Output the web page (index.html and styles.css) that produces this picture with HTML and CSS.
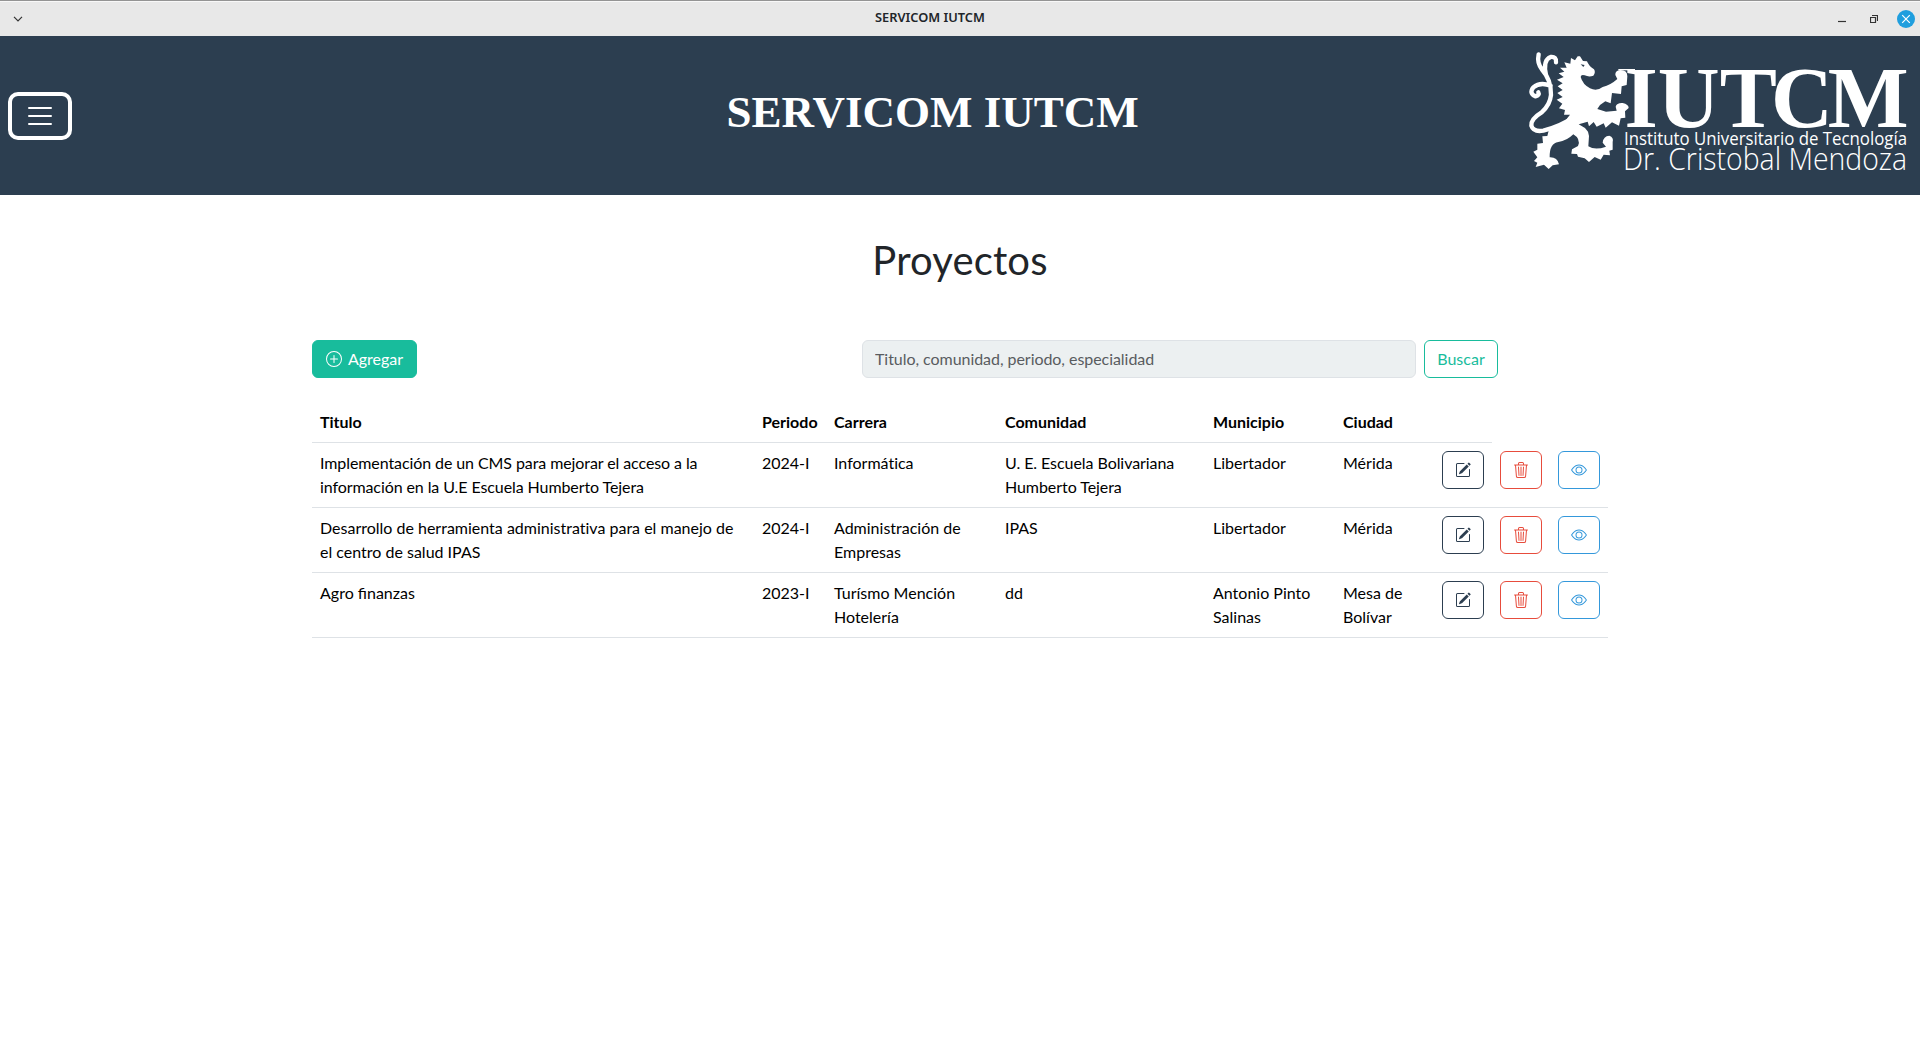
FILE: index.html
```html
<!DOCTYPE html>
<html lang="es">
<head>
<meta charset="utf-8">
<title>SERVICOM IUTCM</title>
<link rel="stylesheet" href="styles.css">
</head>
<body>
<svg class="sprite" aria-hidden="true">
  <symbol id="pencil" viewBox="0 0 16 16"><path d="M15.502 1.94a.5.5 0 0 1 0 .706L14.459 3.69l-2-2L13.502.646a.5.5 0 0 1 .707 0l1.293 1.293zm-1.75 2.456-2-2L4.939 9.21a.5.5 0 0 0-.121.196l-.805 2.414a.25.25 0 0 0 .316.316l2.414-.805a.5.5 0 0 0 .196-.12l6.813-6.814z"/><path fill-rule="evenodd" d="M1 13.5A1.5 1.5 0 0 0 2.5 15h11a1.5 1.5 0 0 0 1.5-1.5v-6a.5.5 0 0 0-1 0v6a.5.5 0 0 1-.5.5h-11a.5.5 0 0 1-.5-.5v-11a.5.5 0 0 1 .5-.5H9a.5.5 0 0 0 0-1H2.5A1.5 1.5 0 0 0 1 2.5v11z"/></symbol>
  <symbol id="trash" viewBox="0 0 16 16"><path d="M6.5 1h3a.5.5 0 0 1 .5.5v1H6v-1a.5.5 0 0 1 .5-.5ZM11 2.5v-1A1.5 1.5 0 0 0 9.5 0h-3A1.5 1.5 0 0 0 5 1.5v1H2.506a.58.58 0 0 0-.01 0H1.5a.5.5 0 0 0 0 1h.538l.853 10.66A2 2 0 0 0 4.885 16h6.23a2 2 0 0 0 1.994-1.84l.853-10.66h.538a.5.5 0 0 0 0-1h-.995a.59.59 0 0 0-.01 0H11Zm1.958 1-.846 10.58a1 1 0 0 1-.997.92h-6.23a1 1 0 0 1-.997-.92L3.042 3.5h9.916Zm-7.487 1a.5.5 0 0 1 .528.47l.5 8.5a.5.5 0 0 1-.998.06L5 5.03a.5.5 0 0 1 .47-.53Zm5.058 0a.5.5 0 0 1 .47.53l-.5 8.5a.5.5 0 1 1-.998-.06l.5-8.5a.5.5 0 0 1 .528-.47ZM8 4.5a.5.5 0 0 1 .5.5v8.5a.5.5 0 0 1-1 0V5a.5.5 0 0 1 .5-.5Z"/></symbol>
  <symbol id="eye" viewBox="0 0 16 16"><path d="M16 8s-3-5.500-8-5.500S0 8 0 8s3 5.500 8 5.500S16 8 16 8zM1.173 8a13.133 13.133 0 0 1 1.660-2.043C4.120 4.668 5.880 3.500 8 3.500c2.120 0 3.879 1.168 5.168 2.457A13.133 13.133 0 0 1 14.828 8c-.058.087-.122.183-.195.288-.335.480-.830 1.120-1.465 1.755C11.879 11.332 10.119 12.500 8 12.500c-2.120 0-3.879-1.168-5.168-2.457A13.134 13.134 0 0 1 1.172 8z"/><path d="M8 5.500a2.500 2.500 0 1 0 0 5 2.500 2.500 0 0 0 0-5zM4.500 8a3.500 3.500 0 1 1 7 0 3.500 3.500 0 0 1-7 0z"/></symbol>
</svg>

<div class="titlebar">
  <svg class="chevron" viewBox="0 0 10 6"><path d="M1 .8 5 4.800 9 .8"/></svg>
  <span class="window-title">SERVICOM IUTCM</span>
  <div class="window-controls">
    <svg width="8" height="18" viewBox="0 0 8 18"><path d="M0 11.500h8"/></svg>
    <svg width="8" height="18" viewBox="0 0 8 18"><path d="M.5 7.500h5v5h-5zM2 5.500h5.500V11"/></svg>
    <svg width="18" height="18" viewBox="0 0 18 18"><circle cx="9" cy="9" r="9"/><path class="cross" d="m5.200 5.200 7.600 7.600m0-7.600-7.600 7.600"/></svg>
  </div>
</div>

<header class="navbar">
  <button class="toggler" aria-label="Menú"><svg viewBox="0 0 30 30"><path d="M4 7h22M4 15h22M4 23h22"/></svg></button>
  <h1 class="brand">SERVICOM IUTCM</h1>
  <svg class="logo" viewBox="1520 46 390 130">
    <g transform="translate(1510 35) scale(.33333)">
      <path class="tail" d="M86 58Q80 85 97 105Q124 135 123 180Q120 210 95 232Q62 252 64 272Q70 292 100 287Q150 275 195 245M108 120Q98 75 122 66Q140 64 138 82M122 152Q90 140 70 157Q56 175 76 184Q90 180 85 172"/>
      <path fill-rule="evenodd" d="M210 64L219 78 231 79Q236 93 252 103Q258 112 250 122Q237 127 224 121Q213 117 212 126Q218 148 240 160Q260 170 278 156Q302 150 322 132L316 120Q315 107 331 105Q352 105 352 124L350 150 335 154 333 177 306 174 302 205 286 199 270 210 262 222 288 230 320 227 317 215Q320 203 338 204Q356 208 356 219L345 229 346 248 332 250 327 272 306 262 287 278 281 265 260 275 251 261 237 274 233 260 206 268 225 279 234 290 237 303 235 334Q255 347 288 335L278 323Q280 303 298 302Q312 307 308 321L308 344 298 347 300 361 281 359 272 374 254 366 237 381 224 370 204 365 201 357 184 356 186 343 204 333Q213 312 190 298Q170 318 145 321Q118 325 119 367Q142 366 147 388L128 391 116 402 102 389 77 396 82 383 72 378 82 367 70 350 82 344 82 326 99 324 97 304 112 303 116 287Q160 270 180 239L162 239 165 225 147 220 157 206 140 194 158 186 142 174 158 165 143 154 158 145 141 134 161 126 146 115 163 110 150 98 170 98 163 82 181 86 183 69 195 76 203 64ZM212 88 220 96 224 90Z"/>
      <path d="M325 102h50v4h-50z"/>
    </g>
    <g font-family="Liberation Serif, serif" font-weight="700" font-size="87" transform="translate(0 126.500)">
      <text transform="scale(.985 1)" x="1649.300 1683 1746 1798 1855.500">IUTCM</text>
    </g>
    <text x="1624" y="145" class="light regular" font-size="17.300" textLength="283" lengthAdjust="spacingAndGlyphs">Instituto Universitario de Tecnología</text>
    <text x="1623" y="170" class="light" font-size="31" textLength="284" lengthAdjust="spacingAndGlyphs">Dr. Cristobal Mendoza</text>
  </svg>
</header>

<main class="container">
  <h2 class="page-title">Proyectos</h2>
  <div class="toolbar">
    <button class="btn btn-add"><svg viewBox="0 0 16 16"><path d="M8 15A7 7 0 1 1 8 1a7 7 0 0 1 0 14zm0 1A8 8 0 1 0 8 0a8 8 0 0 0 0 16z"/><path d="M8 4a.5.5 0 0 1 .5.5v3h3a.5.5 0 0 1 0 1h-3v3a.5.5 0 0 1-1 0v-3h-3a.5.5 0 0 1 0-1h3v-3A.5.5 0 0 1 8 4z"/></svg>Agregar</button>
    <form class="search">
      <input type="text" placeholder="Titulo, comunidad, periodo, especialidad">
      <button type="button" class="btn btn-search">Buscar</button>
    </form>
  </div>
  <table class="projects">
    <colgroup><col class="c-title"><col class="c-period"><col class="c-career"><col class="c-community"><col class="c-town"><col class="c-city"><col class="c-action"><col class="c-action"><col class="c-action"></colgroup>
    <thead>
      <tr><th>Titulo</th><th>Periodo</th><th>Carrera</th><th>Comunidad</th><th>Municipio</th><th>Ciudad</th><th></th></tr>
    </thead>
    <tbody>
      <tr>
        <td class="snug">Implementación de un CMS para mejorar el acceso a la información en la U.E Escuela Humberto Tejera</td><td>2024-I</td><td>Informática</td><td class="tight">U. E. Escuela Bolivariana Humberto Tejera</td><td>Libertador</td><td>Mérida</td>
        <td><button class="btn edit" aria-label="Editar"><svg><use href="#pencil"/></svg></button></td><td><button class="btn delete" aria-label="Eliminar"><svg><use href="#trash"/></svg></button></td><td><button class="btn view" aria-label="Ver"><svg><use href="#eye"/></svg></button></td>
      </tr>
      <tr>
        <td>Desarrollo de herramienta administrativa para el manejo de el centro de salud IPAS</td><td>2024-I</td><td>Administración de Empresas</td><td>IPAS</td><td>Libertador</td><td>Mérida</td>
        <td><button class="btn edit" aria-label="Editar"><svg><use href="#pencil"/></svg></button></td><td><button class="btn delete" aria-label="Eliminar"><svg><use href="#trash"/></svg></button></td><td><button class="btn view" aria-label="Ver"><svg><use href="#eye"/></svg></button></td>
      </tr>
      <tr>
        <td class="ligatures">Agro finanzas</td><td>2023-I</td><td>Turísmo Mención Hotelería</td><td>dd</td><td>Antonio Pinto Salinas</td><td>Mesa de Bolívar</td>
        <td><button class="btn edit" aria-label="Editar"><svg><use href="#pencil"/></svg></button></td><td><button class="btn delete" aria-label="Eliminar"><svg><use href="#trash"/></svg></button></td><td><button class="btn view" aria-label="Ver"><svg><use href="#eye"/></svg></button></td>
      </tr>
    </tbody>
  </table>
</main>
</body>
</html>
```
FILE: styles.css
```css
* { box-sizing: border-box; }
body {
  margin: 0;
  background: #fff;
  color: #212529;
  font: 400 16px/1.5 Lato, sans-serif;
  font-variant-ligatures: none;
}
.sprite { display: none; }

.titlebar {
  display: grid;
  grid-template-columns: 1fr auto 1fr;
  align-items: center;
  height: 36px;
  padding: 0 5px 0 13px;
  border-top: 1px solid #949494;
  background: #e8e8e8;
  box-shadow: inset 0 1px #f8f8f8;
}
.titlebar svg { fill: none; stroke: #333; stroke-width: 1.2; }
.chevron { width: 10px; height: 6px; }
.window-title {
  width: 110px;
  margin-right: 68px;
  padding-bottom: 2px;
  font: 600 12.8px/33px "Noto Sans", sans-serif;
  white-space: nowrap;
}
.window-controls { display: flex; justify-content: flex-end; gap: 24px; }
.window-controls svg:last-child { margin-left: -5px; }
.titlebar circle { fill: #1f9ede; stroke: none; }
.titlebar .cross { stroke: #fff; }

.navbar {
  display: flex;
  align-items: center;
  height: 159px;
  padding: 0 10px 0 8px;
  background: #2c3e50;
}
.toggler {
  width: 64px;
  height: 48px;
  padding: 5px 13px;
  border: 4px solid #fff;
  border-radius: 10px;
  background: none;
}
.toggler svg { display: block; width: 30px; height: 30px; fill: none; stroke: #fff; stroke-width: 2; stroke-linecap: round; }
.brand {
  margin: 0 auto 8px 654.5px;
  color: #fff;
  font: 700 45px/1.2 "Liberation Serif", serif;
}
.logo { width: 390px; height: 130px; fill: #fff; margin-bottom: 9px; }
.tail { fill: none; stroke: #fff; stroke-width: 13; stroke-linecap: round; stroke-linejoin: round; }
.light { font-family: "Open Sans", sans-serif; font-weight: 300; }
.light.regular { font-weight: 400; }

.container { width: 1296px; margin: 0 auto; }
.page-title { margin: 0; padding: 41px 0 56px; text-align: center; font-size: 40px; font-weight: 400; line-height: 48px; letter-spacing: .15px; }
.toolbar { display: flex; justify-content: space-between; padding-right: 110px; }
.btn {
  display: inline-flex;
  align-items: center;
  justify-content: center;
  height: 38px;
  padding: 0 12px;
  border: 1px solid;
  border-radius: 6px;
  background: none;
  font: 400 16px/24px Lato, sans-serif;
}
.btn svg { width: 16px; height: 16px; fill: currentColor; }
.btn-add { gap: 6px; width: 105px; padding: 0; border-color: #18bc9c; background: #18bc9c; color: #fff; }
.btn-search { width: 74px; padding: 0; color: #18bc9c; }
.search { display: flex; gap: 8px; }
.search input {
  width: 554px;
  height: 38px;
  padding: 5px 12px 7px;
  border: 1px solid #dee2e6;
  border-radius: 6px;
  background: #ecf0f1;
  font: inherit;
  font-variant-ligatures: none;
  letter-spacing: -.05px;
}
.search input::placeholder { color: #595c5f; opacity: 1; }

.projects { width: 1296px; margin-top: 24px; border-collapse: separate; border-spacing: 0; table-layout: fixed; color: #000; }
.projects th, .projects td { padding: 8px; border-bottom: 1px solid #dee2e6; text-align: left; vertical-align: top; }
.projects th { height: 41px; font-weight: 700; }
.projects td { height: 65px; }
.projects .snug { letter-spacing: -.09px; }
.projects .tight { letter-spacing: -.06px; }
.projects .ligatures { font-variant-ligatures: normal; }
.c-title { width: 442px; }
.c-period { width: 72px; }
.c-career { width: 171px; }
.c-community { width: 208px; }
.c-town { width: 130px; }
.c-city { width: 99px; }
.c-action { width: 58px; }
.projects .btn { display: flex; width: 42px; }
.edit { color: #2c3e50; }
.delete { color: #e74c3c; }
.view { color: #3498db; }
```
